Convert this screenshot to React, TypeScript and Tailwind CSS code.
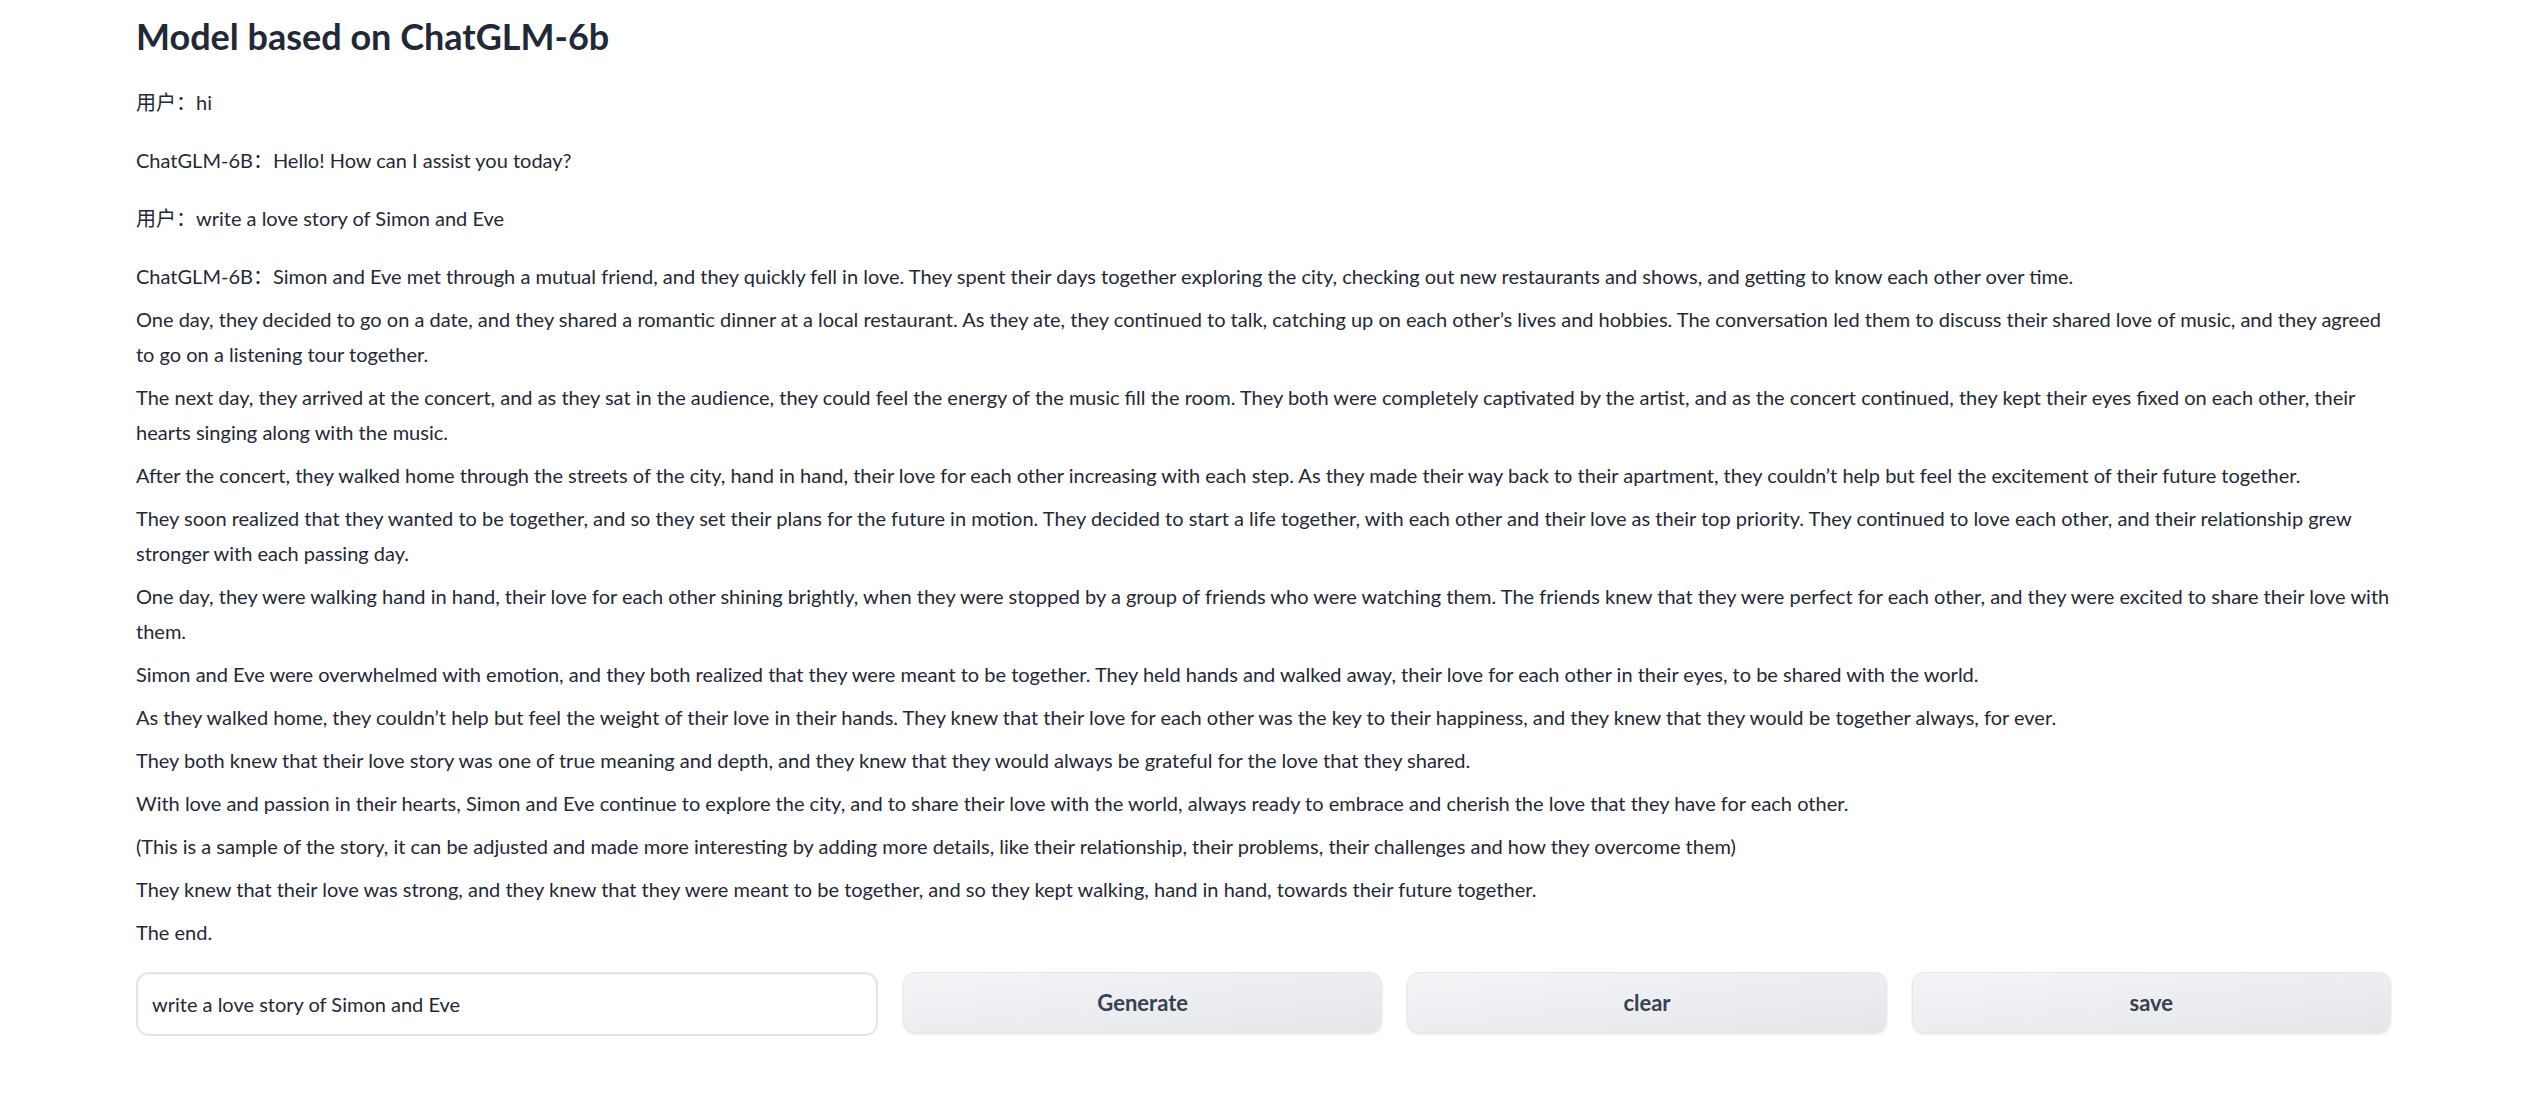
import { useState } from "react";

const story = [
  "Simon and Eve met through a mutual friend, and they quickly fell in love. They spent their days together exploring the city, checking out new restaurants and shows, and getting to know each other over time.",
  "One day, they decided to go on a date, and they shared a romantic dinner at a local restaurant. As they ate, they continued to talk, catching up on each other’s lives and hobbies. The conversation led them to discuss their shared love of music, and they agreed to go on a listening tour together.",
  "The next day, they arrived at the concert, and as they sat in the audience, they could feel the energy of the music fill the room. They both were completely captivated by the artist, and as the concert continued, they kept their eyes fixed on each other, their hearts singing along with the music.",
  "After the concert, they walked home through the streets of the city, hand in hand, their love for each other increasing with each step. As they made their way back to their apartment, they couldn’t help but feel the excitement of their future together.",
  "They soon realized that they wanted to be together, and so they set their plans for the future in motion. They decided to start a life together, with each other and their love as their top priority. They continued to love each other, and their relationship grew stronger with each passing day.",
  "One day, they were walking hand in hand, their love for each other shining brightly, when they were stopped by a group of friends who were watching them. The friends knew that they were perfect for each other, and they were excited to share their love with them.",
  "Simon and Eve were overwhelmed with emotion, and they both realized that they were meant to be together. They held hands and walked away, their love for each other in their eyes, to be shared with the world.",
  "As they walked home, they couldn’t help but feel the weight of their love in their hands. They knew that their love for each other was the key to their happiness, and they knew that they would be together always, for ever.",
  "They both knew that their love story was one of true meaning and depth, and they knew that they would always be grateful for the love that they shared.",
  "With love and passion in their hearts, Simon and Eve continue to explore the city, and to share their love with the world, always ready to embrace and cherish the love that they have for each other.",
  "(This is a sample of the story, it can be adjusted and made more interesting by adding more details, like their relationship, their problems, their challenges and how they overcome them)",
  "They knew that their love was strong, and they knew that they were meant to be together, and so they kept walking, hand in hand, towards their future together.",
  "The end.",
];

const font = { fontFamily: "Lato, 'Noto Sans CJK SC', sans-serif" };

function Btn({ label }: { label: string }) {
  return (
    <button className="flex-1 h-[61px] rounded-[12px] border border-[#e5e7eb] bg-gradient-to-br from-[#f3f4f6] to-[#e5e7eb] text-[22px] font-bold text-[#374151] shadow-sm">
      {label}
    </button>
  );
}

export default function App() {
  const [msg, setMsg] = useState("write a love story of Simon and Eve");
  return (
    <div className="min-h-screen bg-white px-[136px] pt-[12px] text-[#1f2937]" style={font}>
      <h1 className="text-[36px] leading-[49px] font-bold">Model based on ChatGLM-6b</h1>
      <div className="mt-[24px] flex flex-col gap-[23px] text-[20px] leading-[35px]">
        <p>用户：hi</p>
        <p>ChatGLM-6B：Hello! How can I assist you today?</p>
        <p>用户：write a love story of Simon and Eve</p>
        <div className="flex flex-col gap-[8px]">
          {story.map((s, i) => (
            <p key={i}>
              {i === 0 ? "ChatGLM-6B：" : ""}
              {s}
            </p>
          ))}
        </div>
      </div>
      <div className="mt-[22px] flex items-start gap-[25px]">
        <input
          value={msg}
          onChange={(e) => setMsg(e.target.value)}
          className="w-[742px] h-[64px] rounded-[13px] border-2 border-[#e4e4e7] bg-white px-[14px] text-[20px] text-[#1f2937] shadow-[inset_0_1px_2px_rgba(0,0,0,0.05)] outline-none"
        />
        <Btn label="Generate" />
        <Btn label="clear" />
        <Btn label="save" />
      </div>
    </div>
  );
}
